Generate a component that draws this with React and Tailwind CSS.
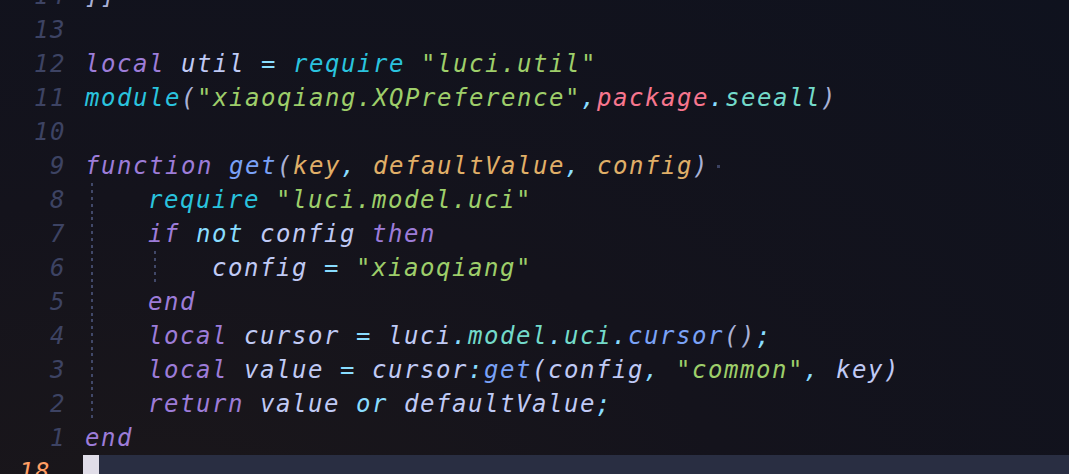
import React from "react";

const C = {
  kw: "text-[#9d7cd8]",
  id: "text-[#c0caf5]",
  op: "text-[#89ddff]",
  fn: "text-[#2ac3de]",
  str: "text-[#9ece6a]",
  pkg: "text-[#f7768e]",
  fld: "text-[#73daca]",
  mth: "text-[#7aa2f7]",
  par: "text-[#e0af68]",
  br: "text-[#a9b1d6]",
};

const lines = [
  { n: "14", indent: 0, toks: [["]]", C.br]] },
  { n: "13", indent: 0, toks: [] },
  {
    n: "12",
    indent: 0,
    toks: [["local", C.kw], [" util ", C.id], ["=", C.op], [" "], ["require", C.fn], [" "], ['"luci.util"', C.str]],
  },
  {
    n: "11",
    indent: 0,
    toks: [
      ["module", C.fn],
      ["(", C.br],
      ['"xiaoqiang.XQPreference"', C.str],
      [",", C.op],
      ["package", C.pkg],
      [".", C.op],
      ["seeall", C.fld],
      [")", C.br],
    ],
  },
  { n: "10", indent: 0, toks: [] },
  {
    n: "9",
    indent: 0,
    dot: true,
    toks: [
      ["function", C.kw],
      [" "],
      ["get", C.mth],
      ["(", C.br],
      ["key", C.par],
      [",", C.op],
      [" "],
      ["defaultValue", C.par],
      [",", C.op],
      [" "],
      ["config", C.par],
      [")", C.br],
    ],
  },
  { n: "8", indent: 1, toks: [["require", C.fn], [" "], ['"luci.model.uci"', C.str]] },
  {
    n: "7",
    indent: 1,
    toks: [["if", C.kw], [" "], ["not", C.op], [" config ", C.id], ["then", C.kw]],
  },
  { n: "6", indent: 2, toks: [["config ", C.id], ["=", C.op], [" "], ['"xiaoqiang"', C.str]] },
  { n: "5", indent: 1, toks: [["end", C.kw]] },
  {
    n: "4",
    indent: 1,
    toks: [
      ["local", C.kw],
      [" cursor ", C.id],
      ["=", C.op],
      [" luci", C.id],
      [".", C.op],
      ["model", C.fld],
      [".", C.op],
      ["uci", C.fld],
      [".", C.op],
      ["cursor", C.mth],
      ["()", C.br],
      [";", C.op],
    ],
  },
  {
    n: "3",
    indent: 1,
    toks: [
      ["local", C.kw],
      [" value ", C.id],
      ["=", C.op],
      [" cursor", C.id],
      [":", C.op],
      ["get", C.mth],
      ["(config", C.id],
      [",", C.op],
      [" "],
      ['"common"', C.str],
      [",", C.op],
      [" key)", C.id],
    ],
  },
  {
    n: "2",
    indent: 1,
    toks: [["return", C.kw], [" value ", C.id], ["or", C.op], [" defaultValue", C.id], [";", C.op]],
  },
  { n: "1", indent: 0, toks: [["end", C.kw]] },
];

const guide =
  "inline-block h-[34px] align-top bg-[linear-gradient(#414868_45%,transparent_45%)] bg-[length:2px_7px] bg-repeat-y";

const Indent = ({ level, n }) => {
  if (!level) return null;
  // guides only inside the function body (lines 8..2)
  const inBody = Number(n) <= 8 && Number(n) >= 2;
  return (
    <span className="inline-flex h-[34px] align-top">
      <span className="w-[63px] pl-[6px] inline-block">
        {inBody && <span className={guide + " w-[3px]"} />}
      </span>
      {level > 1 && (
        <span className="w-[64px] pl-[6px] inline-block">
          <span className={guide + " w-[3px]"} />
        </span>
      )}
    </span>
  );
};

export default function App() {
  return (
    <div
      className="w-[1069px] h-[474px] overflow-hidden bg-[radial-gradient(ellipse_at_15%_115%,#1b171a_0%,#14131c_45%,#0f121e_100%)] italic"
      style={{ fontFamily: '"DejaVu Sans Mono", monospace' }}
    >
      <div className="-mt-[21px] text-[24px] leading-[34px] tracking-[1.55px]">
        {lines.map((l) => (
          <div key={l.n} className="flex h-[34px] whitespace-pre">
            <div className="w-[66px] text-right text-[#3d4363]">{l.n}</div>
            <div className="pl-[19px] flex">
              <Indent level={l.indent} n={l.n} />
              <span>
                {l.toks.map(([t, c], i) => (
                  <span key={i} className={c || "text-[#c0caf5]"}>
                    {t}
                  </span>
                ))}
              </span>
              {l.dot && (
                <span className="ml-[8px] mt-[16px] w-[3px] h-[3px] bg-[#3b4261] inline-block" />
              )}
            </div>
          </div>
        ))}
        <div className="flex h-[34px]">
          <div className="w-[83px] pl-[19px] text-[#ff9e64]">18</div>
          <div className="w-[16px] h-[34px] bg-[#e0dde8]" />
          <div className="flex-1 h-[34px] bg-[#292e42]" />
        </div>
      </div>
    </div>
  );
}
